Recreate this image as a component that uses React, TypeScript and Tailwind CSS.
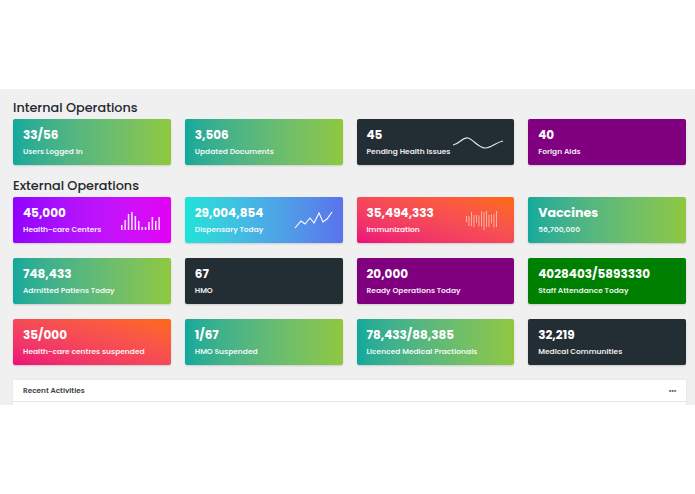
import React from "react";

const font = { fontFamily: "Poppins, 'Open Sans', 'Liberation Sans', sans-serif" };

type Card = { value: string; label: string; bg: string; chart?: React.ReactNode; big?: boolean };

const Wave = () => (
  <svg width="52" height="18" viewBox="0 0 52 18" className="mr-[1px]">
    <path d="M1 12 C8 11 10 4 16 5 C21 6 26 15 33 15 C40 15 44 9 51 8" fill="none" stroke="#e5e7eb" strokeWidth="1.2" />
  </svg>
);

const Bars = () => {
  const hs = [5, 10, 16, 18, 14, 9, 3, 3, 8, 13, 9, 13];
  return (
    <svg width="42" height="20" viewBox="0 0 42 20">
      {hs.map((h, i) => (
        <rect key={i} x={1 + i * 3.4} y={20 - h} width="1.5" height={h} fill="#ffffff" opacity="0.9" />
      ))}
    </svg>
  );
};

const Line = () => (
  <svg width="40" height="22" viewBox="0 0 40 22">
    <path d="M1 19 L7 12 L11 15 L16 9 L20 14 L25 4 L29 13 L33 10 L38 3" fill="none" stroke="#ffffff" strokeWidth="1.1" />
  </svg>
);

const WaveBars = () => {
  const hs = [6, 10, 14, 12, 8, 11, 15, 18, 16, 12, 9, 13, 16];
  return (
    <svg width="34" height="22" viewBox="0 0 34 22" className="mr-[6px]">
      {hs.map((h, i) => (
        <rect key={i} x={1 + i * 2.5} y={11 - h / 2 + (i % 2 ? 1 : -1)} width="0.9" height={h} fill="#ffd0c0" opacity="0.85" />
      ))}
    </svg>
  );
};

const tg = "bg-gradient-to-r from-[#10a99b] to-[#8fc83e]";
const dark = "bg-[#232d34]";
const purple = "bg-[#800080]";

const internal: Card[] = [
  { value: "33/56", label: "Users Logged in", bg: tg },
  { value: "3,506", label: "Updated Documents", bg: tg },
  { value: "45", label: "Pending Health Issues", bg: dark, chart: <Wave /> },
  { value: "40", label: "Forign Aids", bg: purple },
];

const external: Card[] = [
  { value: "45,000", label: "Health-care Centers", bg: "bg-gradient-to-r from-[#9300ff] to-[#e300f6]", chart: <Bars /> },
  { value: "29,004,854", label: "Dispensary Today", bg: "bg-gradient-to-r from-[#1de3d8] to-[#5a72ec]", chart: <Line /> },
  { value: "35,494,333", label: "Immunization", bg: "bg-gradient-to-tr from-[#ec0a78] to-[#ff6a06]", chart: <WaveBars /> },
  { value: "Vaccines", label: "56,700,000", bg: tg, big: true },
  { value: "748,433", label: "Admitted Patiens Today", bg: tg },
  { value: "67", label: "HMO", bg: dark },
  { value: "20,000", label: "Ready Operations Today", bg: purple },
  { value: "4028403/5893330", label: "Staff Attendance Today", bg: "bg-[#008000]" },
  { value: "35/000", label: "Health-care centres suspended", bg: "bg-gradient-to-tr from-[#ec0a78] to-[#ff6a06]" },
  { value: "1/67", label: "HMO Suspended", bg: tg },
  { value: "78,433/88,385", label: "Licenced Medical Practionals", bg: tg },
  { value: "32,219", label: "Medical Communities", bg: dark },
];

function StatCard({ c }: { c: Card }) {
  return (
    <div className={`${c.bg} h-[46px] rounded-[2px] shadow-[0_1px_2px_rgba(0,0,0,0.15)] flex items-center justify-between pl-[10px] pr-[9px]`}>
      <div className="flex flex-col text-white whitespace-nowrap">
        <div className={`${c.big ? "text-[12.6px]" : "text-[12px]"} font-bold leading-[14px]`}>{c.value}</div>
        <div className="text-[7.5px] font-semibold leading-[10px] mt-[5px] opacity-90">{c.label}</div>
      </div>
      {c.chart}
    </div>
  );
}

export default function App() {
  return (
    <div className="w-[695px] h-[494px] bg-white overflow-hidden" style={font}>
      <div className="h-[89px] bg-white" />
      <div className="h-[316px] bg-[#f0f0f0] pl-[13px] pr-[9px] pt-[9px] overflow-hidden">
        <h2 className="text-[12.8px] font-medium text-[#24282d] leading-[20px]">Internal Operations</h2>
        <div className="grid grid-cols-4 gap-x-[14px] mt-[1px]">
          {internal.map((c, i) => (
            <StatCard key={i} c={c} />
          ))}
        </div>
        <h2 className="text-[12.8px] font-medium text-[#24282d] leading-[20px] mt-[11px]">External Operations</h2>
        <div className="grid grid-cols-4 gap-x-[14px] gap-y-[15px] mt-[1px]">
          {external.map((c, i) => (
            <StatCard key={i} c={c} />
          ))}
        </div>
        <div className="mt-[15px] bg-white shadow-[0_0_2px_rgba(0,0,0,0.08)] h-[40px]">
          <div className="h-[22px] flex items-center justify-between px-[10px] border-b border-[#e6e6e6]">
            <span className="text-[7.3px] font-semibold text-[#3b3f44] mt-[1px]">Recent Activities</span>
            <span className="text-[6px] font-bold text-[#555] leading-none tracking-[-0.5px]">•••</span>
          </div>
        </div>
      </div>
    </div>
  );
}
